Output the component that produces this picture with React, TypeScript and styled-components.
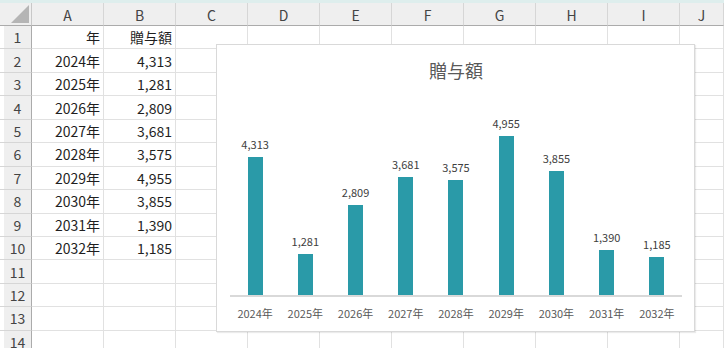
import React from 'react';
import styled, { createGlobalStyle } from 'styled-components';

const GlobalStyle = createGlobalStyle`
  html, body {
    margin: 0;
    padding: 0;
    background: #ffffff;
  }
  body {
    width: 724px;
    height: 348px;
    overflow: hidden;
    font-family: 'Noto Sans CJK JP', 'Noto Sans', sans-serif;
  }
`;

const COL_W = 72;
const ROW_H = 23.44;
const columns = ['A', 'B', 'C', 'D', 'E', 'F', 'G', 'H', 'I', 'J'];

const data = [
  { year: '2024年', value: 4313 },
  { year: '2025年', value: 1281 },
  { year: '2026年', value: 2809 },
  { year: '2027年', value: 3681 },
  { year: '2028年', value: 3575 },
  { year: '2029年', value: 4955 },
  { year: '2030年', value: 3855 },
  { year: '2031年', value: 1390 },
  { year: '2032年', value: 1185 },
];

// シート全体
const Sheet = styled.div`
  position: relative;
  width: 724px;
  height: 348px;
  overflow: hidden;
  border-top: 3px solid #deeeed;
  box-sizing: border-box;
`;

const Grid = styled.div`
  display: grid;
  grid-template-columns: 32px repeat(9, ${COL_W}px) 1fr;
  grid-template-rows: 23px;
  grid-auto-rows: ${ROW_H}px;
`;

const Corner = styled.div`
  background: #efefef;
  border-right: 1px solid #c8c8c8;
  border-bottom: 1px solid #ababab;
  box-sizing: border-box;
  display: flex;
  align-items: flex-end;
  justify-content: flex-end;
  padding: 0 2px 2px 0;
`;

const CornerTriangle = styled.div`
  width: 18px;
  height: 18px;
  background: #b5b5b5;
  clip-path: polygon(100% 0, 100% 100%, 0 100%);
`;

const ColHead = styled.div`
  background: #efefef;
  border-right: 1px solid #d6d6d6;
  border-bottom: 1px solid #ababab;
  box-sizing: border-box;
  display: flex;
  align-items: center;
  justify-content: center;
  font-size: 14px;
  color: #444444;
  padding-top: 1px;
`;

const RowHead = styled.div`
  background: #efefef;
  border-right: 1px solid #ababab;
  border-bottom: 1px solid #d6d6d6;
  box-shadow: inset 4px 0 0 #ffffff;
  box-sizing: border-box;
  display: flex;
  align-items: center;
  justify-content: center;
  padding-left: 4px;
  font-size: 14px;
  color: #444444;
`;

const Cell = styled.div`
  border-right: 1px solid #e1e1e1;
  border-bottom: 1px solid #e1e1e1;
  box-sizing: border-box;
  display: flex;
  align-items: center;
  justify-content: flex-end;
  padding-right: 3px;
  font-size: 14px;
  color: #1f1f1f;
  white-space: nowrap;
`;

// グラフ（シート上に浮かぶオブジェクト）
const Chart = styled.div`
  position: absolute;
  left: 216px;
  top: 41px;
  width: 479px;
  height: 288px;
  background: #ffffff;
  border: 1px solid #d9d9d9;
  box-shadow: 1px 1px 1px rgba(0, 0, 0, 0.08);
  box-sizing: border-box;
  padding: 13px 12px 0 13px;
  display: flex;
  flex-direction: column;
`;

const Title = styled.div`
  height: 24px;
  line-height: 24px;
  text-align: center;
  font-size: 18px;
  color: #595959;
`;

const Plot = styled.div`
  height: 213px;
  display: flex;
  align-items: flex-end;
  border-bottom: 2px solid #d9d9d9;
`;

const BarSlot = styled.div`
  flex: 1;
  display: flex;
  flex-direction: column;
  align-items: center;
  justify-content: flex-end;
`;

const DataLabel = styled.div`
  font-size: 11px;
  line-height: 14px;
  color: #404040;
  margin-bottom: 6px;
`;

const Bar = styled.div`
  width: 15px;
  background: #2a9aa8;
`;

const AxisRow = styled.div`
  display: flex;
  padding-top: 8px;
`;

const AxisLabel = styled.div`
  flex: 1;
  text-align: center;
  font-size: 11px;
  line-height: 16px;
  color: #595959;
`;

const SCALE = 138.3 / 4313;

const App: React.FC = () => {
  const rows = Array.from({ length: 14 }, (_, i) => i + 1);

  const cellText = (row: number, col: string) => {
    if (row === 1) {
      if (col === 'A') return '年';
      if (col === 'B') return '贈与額';
      return '';
    }
    const d = data[row - 2];
    if (!d) return '';
    if (col === 'A') return d.year;
    if (col === 'B') return d.value.toLocaleString('en-US');
    return '';
  };

  return (
    <React.Fragment>
      <GlobalStyle />
      <Sheet>
        <Grid>
          <Corner>
            <CornerTriangle />
          </Corner>
          {columns.map((c) => (
            <ColHead key={c}>{c}</ColHead>
          ))}
          {rows.map((r) => (
            <React.Fragment key={r}>
              <RowHead>{r}</RowHead>
              {columns.map((c) => (
                <Cell key={c}>{cellText(r, c)}</Cell>
              ))}
            </React.Fragment>
          ))}
        </Grid>

        <Chart>
          <Title>贈与額</Title>
          <Plot>
            {data.map((d) => (
              <BarSlot key={d.year}>
                <DataLabel>{d.value.toLocaleString('en-US')}</DataLabel>
                <Bar style={{ height: `${Math.round(d.value * SCALE * 10) / 10}px` }} />
              </BarSlot>
            ))}
          </Plot>
          <AxisRow>
            {data.map((d) => (
              <AxisLabel key={d.year}>{d.year}</AxisLabel>
            ))}
          </AxisRow>
        </Chart>
      </Sheet>
    </React.Fragment>
  );
};

export default App;
